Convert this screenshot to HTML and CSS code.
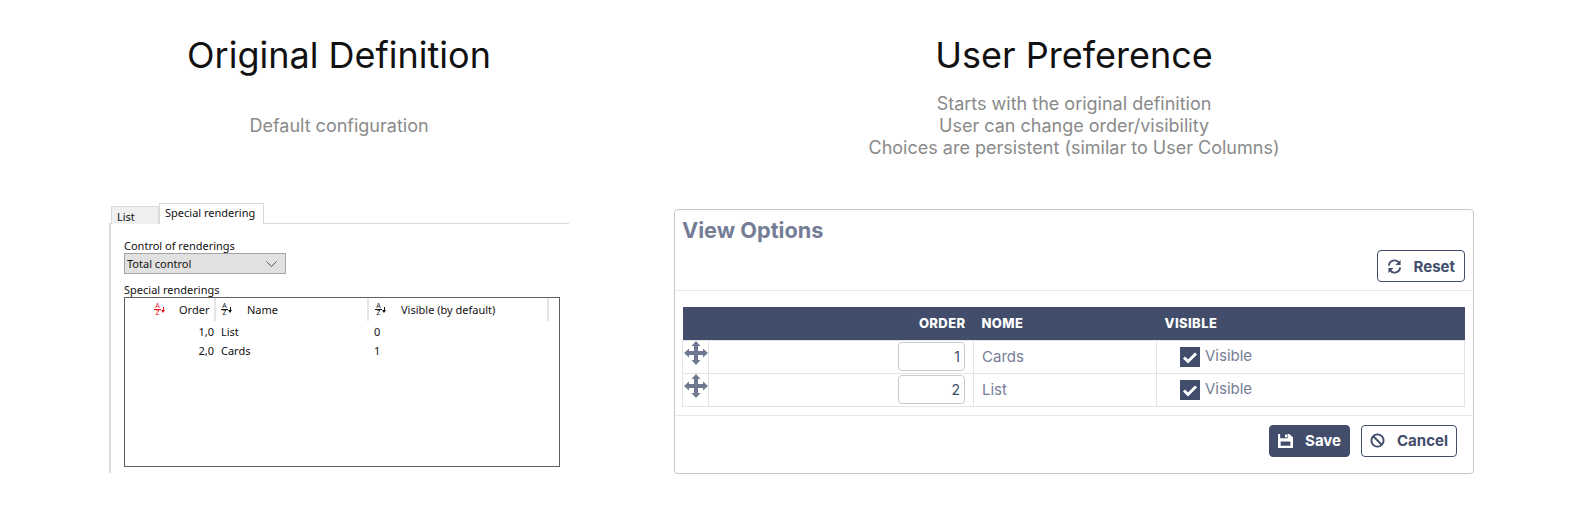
FILE: index.html
```html
<!DOCTYPE html>
<html lang="en">
<head>
	<meta charset="UTF-8">
	<title>View options</title>
	<link rel="stylesheet" href="styles.css">
</head>
<body>
<div class="page">
	<section class="col col-left">
		<h1>Original Definition</h1>
		<div class="sub"><p>Default configuration</p></div>
		<div class="dlg">
			<ul class="tabs">
				<li class="tab">List</li>
				<li class="tab tab-on">Special rendering</li>
			</ul>
			<div class="tab-body">
				<label class="lbl">Control of renderings</label>
				<div class="combo">
					<span>Total control</span>
					<svg width="11" height="6" viewBox="0 0 11 6"><path d="M.5.5l5 5 5-5" fill="none" stroke="#555"/></svg>
				</div>
				<label class="lbl lbl-list">Special renderings</label>
				<div class="listbox">
					<div class="list-head">
						<div class="lh lh-order">
							<span class="az az-red"><i>A</i><i>Z</i></span><span class="lh-t">Order</span>
						</div>
						<div class="lh lh-name">
							<span class="az"><i>A</i><i>Z</i></span><span class="lh-t">Name</span>
						</div>
						<div class="lh lh-vis">
							<span class="az"><i>A</i><i>Z</i></span><span class="lh-t">Visible (by default)</span>
						</div>
					</div>
					<div class="list-row"><span class="c1">1,0</span><span class="c2">List</span><span>0</span></div>
					<div class="list-row"><span class="c1">2,0</span><span class="c2">Cards</span><span>1</span></div>
				</div>
			</div>
		</div>
	</section>

	<section class="col col-right">
		<h1>User Preference</h1>
		<div class="sub">
			<p>Starts with the original definition</p>
			<p>User can change order/visibility</p>
			<p>Choices are persistent (similar to User Columns)</p>
		</div>
		<div class="card">
			<h2>View Options</h2>
			<div class="card-top">
				<button class="btn">
					<svg class="ico" viewBox="0 0 16 16"><path d="M2 7A6 6 0 0 1 13 4.200M14 9A6 6 0 0 1 3 11.800" fill="none" stroke="currentColor" stroke-width="2"/><path d="M14.500 1v5.500H9zM1.500 15V9.500H7z" fill="currentColor"/></svg>
					Reset
				</button>
			</div>
			<div class="card-mid">
				<table class="grid">
					<thead>
						<tr><th class="t-drag"></th><th class="t-order">Order</th><th class="t-name">Nome</th><th class="t-vis">Visible</th></tr>
					</thead>
					<tbody>
						<tr>
							<td class="t-drag"><svg class="move" viewBox="0 0 24 24"><path d="M12 0l4.500 5H14v5h5V7.500l5 4.500-5 4.500V14h-5v5h2.500L12 24l-4.500-5H10v-5H5v2.500L0 12l5-4.500V10h5V5H7.500z"/></svg></td>
							<td class="t-order"><input class="num" type="text" value="1"></td>
							<td class="t-name">Cards</td>
							<td class="t-vis"><span class="chk"><svg viewBox="0 0 20 20"><path d="M4 10.500l4 4 8-8" fill="none" stroke="#fff" stroke-width="3"/></svg></span>Visible</td>
						</tr>
						<tr>
							<td class="t-drag"><svg class="move" viewBox="0 0 24 24"><path d="M12 0l4.500 5H14v5h5V7.500l5 4.500-5 4.500V14h-5v5h2.500L12 24l-4.500-5H10v-5H5v2.500L0 12l5-4.500V10h5V5H7.500z"/></svg></td>
							<td class="t-order"><input class="num" type="text" value="2"></td>
							<td class="t-name">List</td>
							<td class="t-vis"><span class="chk"><svg viewBox="0 0 20 20"><path d="M4 10.500l4 4 8-8" fill="none" stroke="#fff" stroke-width="3"/></svg></span>Visible</td>
						</tr>
					</tbody>
				</table>
			</div>
			<div class="card-foot">
				<button class="btn btn-dark">
					<svg class="ico" viewBox="0 0 14 14"><path fill-rule="evenodd" d="M0 1h2v4h7V1h1.500L14 4v10H0zM2.500 8v4h9V8zM6.500 1.500h2V4h-2z" fill="currentColor"/></svg>
					Save
				</button>
				<button class="btn">
					<svg class="ico" viewBox="0 0 16 16"><circle cx="8" cy="8" r="6.500" fill="none" stroke="currentColor" stroke-width="2"/><path d="M3.500 3.500l9 9" stroke="currentColor" stroke-width="2"/></svg>
					Cancel
				</button>
			</div>
		</div>
	</section>
</div>
</body>
</html>
```

FILE: styles.css
```css
*{
	margin: 0;
	padding: 0;
	box-sizing: border-box;
}
body{
	background: #fff;
	font-family: "Inter", "Liberation Sans", sans-serif;
}
.page{
	display: grid;
	grid-template-columns: 460px 800px;
	column-gap: 105px;
	padding: 0 0 0 109px;
}
.col{
	display: flex;
	flex-direction: column;
}
h1{
	margin-top: 33px;
	height: 44px;
	font-size: 36px;
	line-height: 44px;
	font-weight: 400;
	color: #111;
	text-align: center;
}
.sub{
	height: 125px;
	padding-top: 16px;
	display: flex;
	flex-direction: column;
	justify-content: flex-start;
	text-align: center;
	font-size: 18px;
	line-height: 22px;
	color: #8a8a8a;
}
.col-left .sub{
	padding-top: 38px;
}

/* left: windows dialog */
.dlg{
	font-family: "Noto Sans", "Liberation Sans", sans-serif;
	font-size: 11px;
	color: #111;
}
.tabs{
	list-style: none;
	display: flex;
	align-items: flex-end;
	height: 21px;
	margin-top: 1px;
	position: relative;
	z-index: 1;
}
.tab{
	width: 48px;
	height: 18px;
	margin-left: 2px;
	padding: 2px 0 0 5px;
	background: #f0f0f0;
	border: 1px solid #d9d9d9;
	border-bottom: 0;
	line-height: 15px;
}
.tab-on{
	width: 105px;
	height: 21px;
	margin-left: 0;
	padding: 1px 0 0 5px;
	background: #fff;
	border-width: 1px 1px 0 1px;
}
.tab-body{
	width: 460px;
	height: 250px;
	border-top: 1px solid #d9d9d9;
	border-left: 2px solid #dcdcdc;
	margin-top: -1px;
	padding: 15px 0 0 13px;
}
.lbl{
	display: block;
	height: 14px;
	line-height: 14px;
}
.lbl-list{
	margin-top: 9px;
}
.combo{
	width: 162px;
	height: 21px;
	background: #e1e1e1;
	border: 1px solid #a5a5a5;
	display: flex;
	align-items: center;
	justify-content: space-between;
	padding: 0 8px 0 2px;
}
.listbox{
	width: 436px;
	height: 170px;
	border: 1px solid #5f5f5f;
}
.list-head{
	display: flex;
	height: 23px;
	margin-bottom: 1px;
}
.lh{
	display: flex;
	align-items: center;
	border-right: 2px solid #e5e5e5;
}
.lh-order{
	width: 91px;
	padding-left: 29px;
}
.lh-order .lh-t{
	margin-left: 13px;
}
.lh-name{
	width: 153px;
	padding-left: 5px;
}
.lh-name .lh-t{
	margin-left: 14px;
}
.lh-vis{
	width: 180px;
	padding-left: 6px;
}
.lh-vis .lh-t{
	margin-left: 14px;
}
.az{
	position: relative;
	display: inline-block;
	width: 12px;
	height: 14px;
	font-size: 7px;
	line-height: 6px;
}
.az i{
	display: block;
	width: 7px;
	font-style: normal;
	text-align: center;
}
.az i:first-child{
	height: 7px;
	border-bottom: 1px solid currentColor;
}
.az::after{
	content: "";
	position: absolute;
	left: 7px;
	top: 7px;
	border-left: 2.500px solid transparent;
	border-right: 2.500px solid transparent;
	border-top: 3px solid currentColor;
}
.az::before{
	content: "";
	position: absolute;
	left: 9px;
	top: 4px;
	width: 1px;
	height: 3px;
	background: currentColor;
}
.az-red{
	color: #e8141b;
}
.list-row{
	display: flex;
	height: 19px;
	line-height: 19px;
}
.list-row .c1{
	width: 89px;
	text-align: right;
}
.list-row .c2{
	width: 160px;
	padding-left: 7px;
}

/* right: view options card */
.card{
	width: 800px;
	height: 265px;
	border: 1px solid #c4c8cc;
	border-radius: 4px;
	margin-top: 7px;
	font-family: "Inter", "Liberation Sans", sans-serif;
	color: #757d96;
	display: flex;
	flex-direction: column;
}
h2{
	font-size: 21.700px;
	line-height: 26px;
	font-weight: 700;
	color: #757d96;
	padding: 7px 7px 0;
}
.card-top{
	display: flex;
	justify-content: flex-end;
	padding: 7px 8px 8px;
	border-bottom: 1px solid #e8e8e8;
	height: 48px;
}
.btn{
	display: inline-flex;
	align-items: center;
	height: 32px;
	padding: 0 9px;
	background: #fff;
	border: 1px solid #414d6b;
	border-radius: 4px;
	color: #414d6b;
	font-family: inherit;
	font-size: 15px;
	font-weight: 700;
	gap: 12px;
}
.btn-dark{
	background: #414d6b;
	color: #fff;
}
.card-foot .btn{
	padding: 0 8px;
}
.ico{
	width: 15px;
	height: 15px;
}
.card-mid{
	padding: 16px 8px 8px 8px;
	border-bottom: 1px solid #e8e8e8;
}
.grid{
	width: 783px;
	margin-left: -1px;
	table-layout: fixed;
	border-collapse: collapse;
	font-size: 15px;
}
.grid th{
	height: 33px;
	background: #414d6b;
	color: #fff;
	font-size: 13px;
	font-weight: 800;
	text-transform: uppercase;
	text-align: left;
	letter-spacing: .4px;
}
.grid td{
	height: 33px;
	border: 1px solid #e4e4e4;
	vertical-align: middle;
}
.grid .t-drag{
	width: 26px;
	vertical-align: top;
}
.grid tbody tr:first-child .t-drag{
	border-bottom: 0;
}
.grid .t-order{
	width: 265px;
	text-align: right;
	padding: 0 8px;
}
.grid .t-name{
	width: 183px;
	padding-left: 8px;
}
.grid th.t-vis{
	padding-left: 8px;
}
.grid td.t-vis{
	padding-left: 23px;
}
.move{
	display: block;
	margin-left: 1px;
	width: 24px;
	height: 24px;
	fill: #6f7891;
}
.num{
	display: block;
	margin-left: auto;
	width: 67px;
	height: 29px;
	border: 1px solid #c6cad0;
	border-radius: 4px;
	padding: 0 4px;
	text-align: right;
	font-family: inherit;
	font-size: 14px;
	color: #414d6b;
}
.chk{
	display: inline-block;
	width: 20px;
	height: 20px;
	background: #414d6b;
	vertical-align: middle;
	margin-right: 5px;
}
.chk svg{
	display: block;
}
.card-foot{
	display: flex;
	justify-content: flex-end;
	gap: 11px;
	padding: 9px 16px 0 0;
}
```
